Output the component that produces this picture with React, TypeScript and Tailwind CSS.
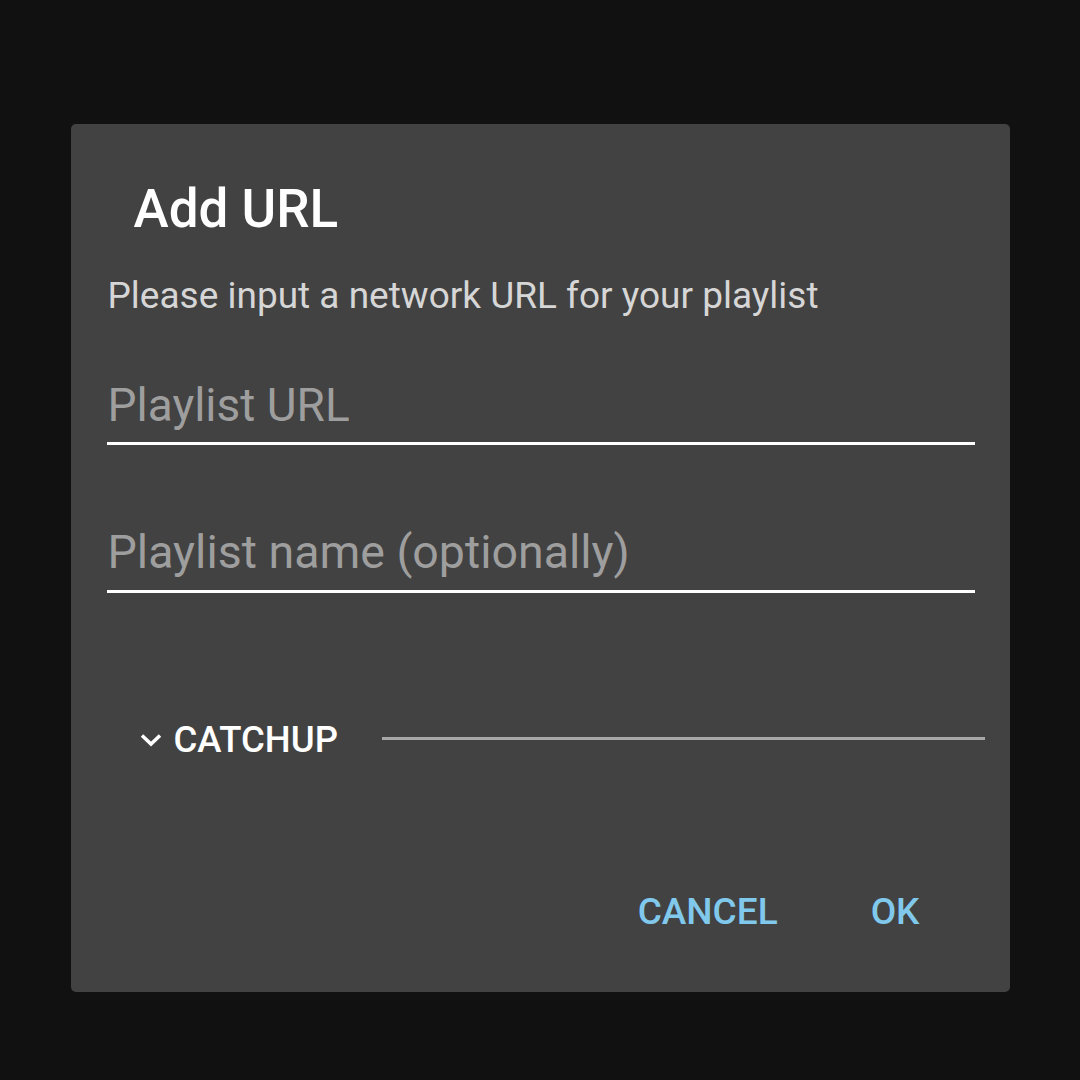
export default function App() {
  return (
    <div className="w-[1080px] h-[1080px] bg-[#111111] flex items-center justify-center" style={{ fontFamily: 'Roboto, "Liberation Sans", sans-serif' }}>
      <div className="w-[939px] h-[868px] mt-[36px] bg-[#424242] rounded-[5px] flex flex-col">
        {/* Title */}
        <h1 className="pl-[63px] pt-[59px] text-[53px] leading-[1] font-medium text-white">Add URL</h1>
        <p className="pl-[37px] mt-[41px] text-[37px] leading-[1] text-[#d6d6d6]">Please input a network URL for your playlist</p>

        {/* Inputs */}
        <div className="pl-[36px] pr-[35px] mt-[68px]">
          <div className="border-b-[3px] border-white pb-[14px] pl-[1px] text-[46px] leading-[1] text-[#9e9e9e]">Playlist URL</div>
        </div>
        <div className="pl-[36px] pr-[35px] mt-[84px]">
          <div className="border-b-[3px] border-white pb-[14px] pl-[1px] text-[46.5px] leading-[1] text-[#9e9e9e]">Playlist name (optionally)</div>
        </div>

        {/* Catchup */}
        <div className="flex items-center pl-[69px] pr-[25px] mt-[129px]">
          <svg width="22" height="14" viewBox="0 0 22 14" className="mr-[12px]">
            <path d="M2 2.5 L11 11 L20 2.5" stroke="white" strokeWidth="3.5" fill="none" />
          </svg>
          <span className="text-[36.5px] leading-[1] font-medium text-white">CATCHUP</span>
          <div className="flex-1 ml-[44px] mb-[3px] h-[3px] bg-[#a8a8a8]" />
        </div>

        {/* Buttons */}
        <div className="flex justify-end items-center mt-auto mb-[62px] pr-[90px] gap-[93px]">
          <button className="text-[37px] leading-[1] font-medium text-[#81c9ec]">CANCEL</button>
          <button className="text-[37px] leading-[1] font-medium text-[#81c9ec]">OK</button>
        </div>
      </div>
    </div>
  )
}
